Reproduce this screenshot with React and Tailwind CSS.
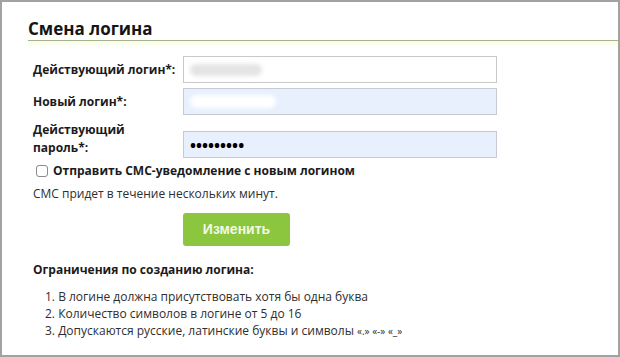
import React from 'react';

const Label = ({ children, className = '' }) => (
    <div className={`w-[150px] shrink-0 text-[12px] leading-[18px] font-bold text-[#1b1b1b] ${className}`}>{children}</div>
);

const App = () => {
    return (
        <div className="w-[620px] h-[357px] border-2 border-[#a2a2a2] bg-white font-['Open_Sans',sans-serif] text-[#2a2a2a] overflow-hidden">
            <div className="pl-[26px] pt-[16px]">
                <h2 className="text-[17px] leading-[22px] font-bold text-[#151515] border-b border-[#a8b28c]">Смена логина</h2>
                <div className="h-[8px] bg-gradient-to-b from-[#fafce6] to-white"></div>
            </div>

            <div className="pl-[31px]">
                <div className="flex flex-col gap-[5px] mt-[7px]">
                    <div className="flex items-center h-[27px]">
                        <Label>Действующий логин*:</Label>
                        <div className="w-[314px] h-[27px] border border-[#c9c9c9] bg-white flex items-center px-[6px]">
                            <div className="w-[72px] h-[12px] rounded-full bg-[#e4e4e4] blur-[2px]"></div>
                        </div>
                    </div>
                    <div className="flex items-center h-[27px]">
                        <Label>Новый логин*:</Label>
                        <div className="w-[314px] h-[27px] border border-[#c6cbd3] bg-[#e8f0fe] flex items-center px-[6px]">
                            <div className="w-[86px] h-[13px] rounded-full bg-white blur-[2px]"></div>
                        </div>
                    </div>
                    <div className="flex items-end h-[38px]">
                        <Label className="pb-[1px]">Действующий<br />пароль*:</Label>
                        <div className="w-[314px] h-[27px] border border-[#c6cbd3] bg-[#e8f0fe] flex items-center px-[6px] text-[16px] text-black font-bold">
                            •••••••••
                        </div>
                    </div>
                </div>

                <label className="flex items-center h-[18px] mt-[4px]">
                    <span className="ml-[3px] w-[12px] h-[12px] border border-[#8a8a8a] rounded-[3px] bg-white"></span>
                    <span className="ml-[5px] text-[12px] font-bold text-[#1b1b1b]">Отправить СМС-уведомление с новым логином</span>
                </label>

                <p className="mt-[5px] text-[12px] leading-[18px] text-[#2e2e2e]">СМС придет в течение нескольких минут.</p>

                <button className="mt-[10px] ml-[150px] w-[107px] h-[33px] rounded-[3px] bg-[#8cc63e] text-[#f2f9e6] text-[14px] font-bold font-['Liberation_Sans',Arial,sans-serif] flex items-center justify-center">
                    Изменить
                </button>

                <p className="mt-[15px] text-[12px] leading-[18px] font-bold text-[#1b1b1b]">Ограничения по созданию логина:</p>

                <ol className="mt-[9px] ml-[12px] text-[12px] leading-[17px] text-[#2e2e2e]">
                    <li>1. В логине должна присутствовать хотя бы одна буква</li>
                    <li>2. Количество символов в логине от 5 до 16</li>
                    <li>3. Допускаются русские, латинские буквы и символы <span className="text-[10px]">«.» «-» «_»</span></li>
                </ol>
            </div>
        </div>
    );
};

export default App;
